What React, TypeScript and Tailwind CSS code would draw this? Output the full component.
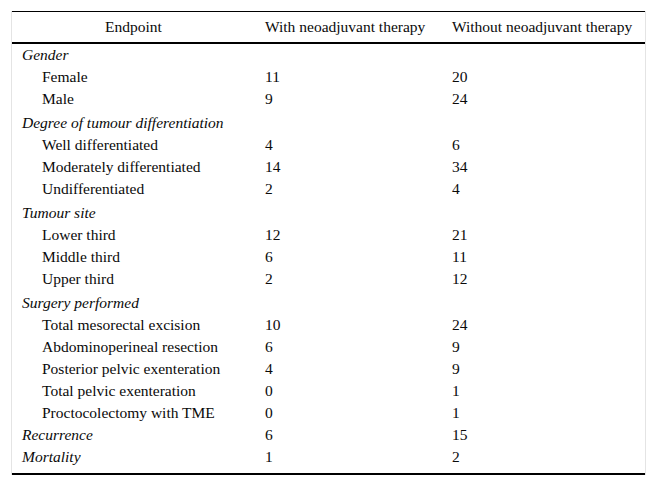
type Row = { label: string; a?: string; b?: string; kind: "head" | "item" | "single" };

const rows: Row[] = [
  { label: "Gender", kind: "head" },
  { label: "Female", a: "11", b: "20", kind: "item" },
  { label: "Male", a: "9", b: "24", kind: "item" },
  { label: "Degree of tumour differentiation", kind: "head" },
  { label: "Well differentiated", a: "4", b: "6", kind: "item" },
  { label: "Moderately differentiated", a: "14", b: "34", kind: "item" },
  { label: "Undifferentiated", a: "2", b: "4", kind: "item" },
  { label: "Tumour site", kind: "head" },
  { label: "Lower third", a: "12", b: "21", kind: "item" },
  { label: "Middle third", a: "6", b: "11", kind: "item" },
  { label: "Upper third", a: "2", b: "12", kind: "item" },
  { label: "Surgery performed", kind: "head" },
  { label: "Total mesorectal excision", a: "10", b: "24", kind: "item" },
  { label: "Abdominoperineal resection", a: "6", b: "9", kind: "item" },
  { label: "Posterior pelvic exenteration", a: "4", b: "9", kind: "item" },
  { label: "Total pelvic exenteration", a: "0", b: "1", kind: "item" },
  { label: "Proctocolectomy with TME", a: "0", b: "1", kind: "item" },
  { label: "Recurrence", a: "6", b: "15", kind: "single" },
  { label: "Mortality", a: "1", b: "2", kind: "single" },
];

export default function App() {
  return (
    <div className="min-h-[485px] w-[659px] bg-white pl-[11px] pt-[11px] [font-family:'Liberation_Serif','Times_New_Roman',serif] text-[15.5px] text-[#0a0a0a]">
      <div className="w-[635px] border-x border-[#e4e4e4]">
        {/* Header */}
        <div className="grid h-[33px] grid-cols-[243px_187px_1fr] items-center border-t border-b-2 border-t-black border-b-black">
          <div className="text-center">Endpoint</div>
          <div className="pl-[10px]">With neoadjuvant therapy</div>
          <div className="pl-[10px]">Without neoadjuvant therapy</div>
        </div>

        {/* Body */}
        <div className="border-b-2 border-black pb-[5px]">
          {rows.map((r, i) => (
            <div
              key={r.label}
              className={`grid grid-cols-[243px_187px_1fr] items-center leading-[22px] ${
                r.kind === "head" && i > 0 ? "pt-[2px]" : ""
              }`}
            >
              <div className={r.kind === "item" ? "pl-[30px]" : "pl-[10px] italic"}>{r.label}</div>
              <div className="pl-[10px]">{r.a}</div>
              <div className="pl-[10px]">{r.b}</div>
            </div>
          ))}
        </div>
      </div>
    </div>
  );
}
